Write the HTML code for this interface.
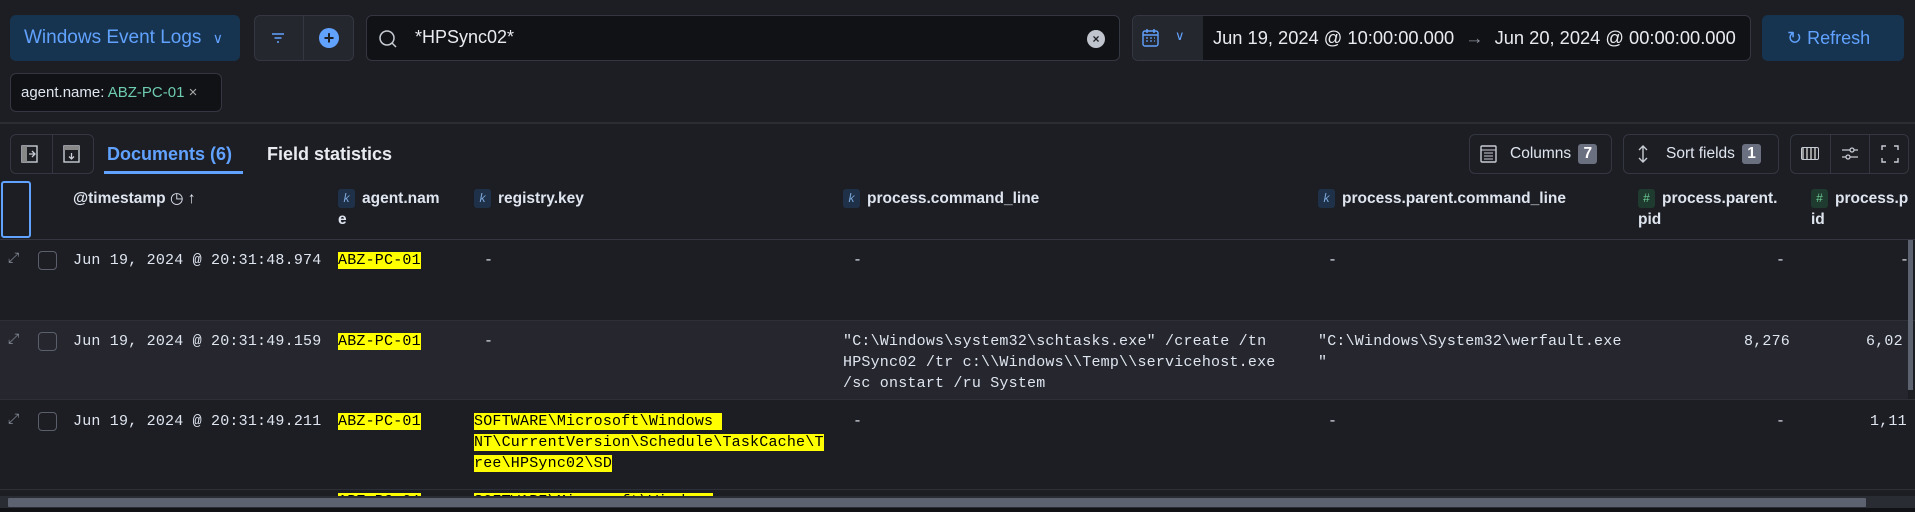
<!DOCTYPE html>
<html><head><meta charset="utf-8">
<style>
*{box-sizing:border-box;margin:0;padding:0}
body{width:1915px;height:512px;overflow:hidden;background:#1d1e24;font-family:"Liberation Sans",sans-serif;color:#dfe5ef;position:relative}
.a{position:absolute}
.btn{border:1px solid #343741;border-radius:6px}
.mono{font-family:"Liberation Mono",monospace;font-size:15px;letter-spacing:0.2px;color:#dfe5ef;line-height:21px}
.hl{background:#ffff00;color:#000}
.hd{font-weight:bold;font-size:15.5px;color:#dfe5ef;line-height:21px}
.k{display:inline-block;width:17px;height:19px;border-radius:3px;background:#1f3148;color:#7ba7d9;font-style:italic;font-size:12px;text-align:center;line-height:19px;margin-right:7px;vertical-align:1px;font-weight:normal}
.n{background:#1f3a2e;color:#6dcc95;font-style:normal}
.cb{width:19px;height:19px;border:1px solid #5a5f6b;border-radius:4px}
.exp{color:#8a8f9a;font-size:14px}
</style></head><body>
<!-- data view -->
<div class="a" style="left:10px;top:15px;width:230px;height:46px;background:#163450;border-radius:6px;color:#61a2ff;font-size:19px;line-height:46px;padding-left:14px">Windows Event Logs <span style="font-size:14px;margin-left:6px">&#8744;</span></div>
<div class="a btn" style="left:254px;top:15px;width:100px;height:46px;background:#25272f"></div>
<div class="a" style="left:303px;top:15px;width:1px;height:46px;background:#343741"></div>
<svg class="a" style="left:270px;top:30px" width="16" height="16"><path d="M2 4h12M4.5 8h7M7 12h2" stroke="#61a2ff" stroke-width="1.5"/></svg>
<div class="a" style="left:319px;top:28px;width:20px;height:20px;border-radius:50%;background:#61a2ff;color:#1d1e24;text-align:center;line-height:20px;font-weight:bold;font-size:18px">+</div>
<div class="a btn" style="left:366px;top:15px;width:754px;height:46px;background:#111216"></div>
<svg class="a" style="left:378px;top:29px" width="20" height="20"><circle cx="9" cy="9" r="7" fill="none" stroke="#c8ccd4" stroke-width="1.5"/><path d="M14 14l4 4" stroke="#c8ccd4" stroke-width="1.5"/></svg>
<div class="a" style="left:415px;top:27px;font-size:18px;color:#e8ebf0">*HPSync02*</div>
<div class="a" style="left:1087px;top:30px;width:18px;height:18px;border-radius:50%;background:#c0c4cc;color:#1d1e24;text-align:center;font-size:12px;line-height:18px;font-weight:bold">×</div>
<div class="a btn" style="left:1132px;top:15px;width:619px;height:46px;background:#111216"></div>
<div class="a" style="left:1133px;top:16px;width:70px;height:44px;background:#25272f;border-radius:5px 0 0 5px"></div>
<svg class="a" style="left:1141px;top:28px" width="20" height="20"><rect x="2" y="3" width="15" height="15" rx="2" fill="none" stroke="#61a2ff" stroke-width="1.4"/><path d="M2 7h15M6 1v4M13 1v4" stroke="#61a2ff" stroke-width="1.4"/><path d="M5 10h2M9 10h2M13 10h1M5 13h2M9 13h2M13 13h1" stroke="#61a2ff" stroke-width="1.2"/></svg>
<div class="a" style="left:1175px;top:28px;color:#61a2ff;font-size:13px">&#8744;</div>
<div class="a" style="left:1213px;top:27px;font-size:18.3px;color:#e8ebf0">Jun 19, 2024 @ 10:00:00.000 <span style="color:#8a8f9a;margin:0 6px">→</span> Jun 20, 2024 @ 00:00:00.000</div>
<div class="a" style="left:1762px;top:15px;width:142px;height:46px;background:#163450;border-radius:6px;color:#61a2ff;font-size:18px;line-height:46px;padding-left:25px">&#8635; Refresh</div>
<!-- pill -->
<div class="a btn" style="left:10px;top:73px;width:212px;height:39px;background:#111216;font-size:15px;line-height:37px;padding-left:10px">agent.name: <span style="color:#6dccb1">ABZ-PC-01</span> <span style="color:#aaa">×</span></div>
<div class="a" style="left:0;top:122px;width:1915px;height:2px;background:#2b2d35"></div>
<!-- toolbar -->
<div class="a btn" style="left:10px;top:134px;width:84px;height:40px"></div>
<div class="a" style="left:52px;top:134px;width:1px;height:40px;background:#343741"></div>
<svg class="a" style="left:20px;top:144px" width="20" height="20"><rect x="2" y="2" width="15" height="16" fill="none" stroke="#c8ccd4" stroke-width="1.4"/><path d="M2 2h5v16H2z" fill="#888"/><path d="M9 10h6M12 7l3 3-3 3" stroke="#c8ccd4" fill="none" stroke-width="1.3"/></svg>
<svg class="a" style="left:62px;top:144px" width="20" height="20"><rect x="2" y="2" width="15" height="16" fill="none" stroke="#c8ccd4" stroke-width="1.4"/><path d="M2 2h15v4H2z" fill="#888"/><path d="M9.5 9v6M7 12.5l2.5 2.5 2.5-2.5" stroke="#c8ccd4" fill="none" stroke-width="1.3"/></svg>
<div class="a" style="left:107px;top:144px;font-size:18px;font-weight:bold;color:#61a2ff">Documents (6)</div>
<div class="a" style="left:104px;top:171px;width:139px;height:3px;background:#61a2ff"></div>
<div class="a" style="left:267px;top:144px;font-size:18px;font-weight:bold;color:#e8ebf0">Field statistics</div>
<div class="a btn" style="left:1469px;top:134px;width:143px;height:40px;font-size:15.5px;line-height:38px;padding-left:40px">Columns <span style="display:inline-block;background:#6b7080;color:#fff;border-radius:3px;padding:0 5px;line-height:20px;margin-left:3px;font-weight:bold">7</span></div>
<svg class="a" style="left:1479px;top:144px" width="20" height="20"><rect x="2" y="2" width="15" height="16" rx="1" fill="none" stroke="#c8ccd4" stroke-width="1.4"/><path d="M2 6h15M5 9h9M5 12h9M5 15h9" stroke="#c8ccd4" stroke-width="1"/></svg>
<div class="a btn" style="left:1623px;top:134px;width:156px;height:40px;font-size:15.5px;line-height:38px;padding-left:42px">Sort fields <span style="display:inline-block;background:#6b7080;color:#fff;border-radius:3px;padding:0 5px;line-height:20px;margin-left:3px;font-weight:bold">1</span></div>
<svg class="a" style="left:1636px;top:144px" width="14" height="20"><path d="M7 2v16M3 6l4-4 4 4M3 14l4 4 4-4" stroke="#c8ccd4" fill="none" stroke-width="1.4"/></svg>
<div class="a btn" style="left:1790px;top:134px;width:119px;height:40px"></div>
<div class="a" style="left:1830px;top:134px;width:1px;height:40px;background:#343741"></div>
<div class="a" style="left:1869px;top:134px;width:1px;height:40px;background:#343741"></div>
<div class="a" style="left:1801px;top:147px;width:18px;height:13px;border:1.5px solid #c8ccd4;border-radius:2px;background:repeating-linear-gradient(90deg,#999 0 2px,transparent 2px 4px)"></div>
<svg class="a" style="left:1840px;top:144px" width="20" height="20"><path d="M2 6h16M2 13h16" stroke="#c8ccd4" stroke-width="1.3"/><circle cx="12" cy="6" r="2" fill="#1d1e24" stroke="#c8ccd4" stroke-width="1.3"/><circle cx="8" cy="13" r="2" fill="#1d1e24" stroke="#c8ccd4" stroke-width="1.3"/></svg>
<svg class="a" style="left:1880px;top:144px" width="20" height="20"><path d="M2 6V2h4M14 2h4v4M18 14v4h-4M6 18H2v-4" stroke="#c8ccd4" fill="none" stroke-width="1.4"/></svg>
<!-- header -->
<div class="a" style="left:1px;top:181px;width:30px;height:57px;border:2px solid #61a2ff;border-radius:3px"></div>
<div class="a hd" style="left:73px;top:188px">@timestamp <span style="font-weight:normal">&#9719; ↑</span></div>
<div class="a hd" style="left:338px;top:188px;width:110px"><span class="k">k</span>agent.nam<br>e</div>
<div class="a hd" style="left:474px;top:188px"><span class="k">k</span>registry.key</div>
<div class="a hd" style="left:843px;top:188px"><span class="k">k</span>process.command_line</div>
<div class="a hd" style="left:1318px;top:188px"><span class="k">k</span>process.parent.command_line</div>
<div class="a hd" style="left:1638px;top:188px"><span class="k n">#</span>process.parent.<br>pid</div>
<div class="a hd" style="left:1811px;top:188px;width:97px;overflow:hidden;white-space:nowrap"><span class="k n">#</span>process.p<br>id</div>
<div class="a" style="left:0;top:239px;width:1915px;height:1px;background:#343741"></div>
<!-- rows -->
<div class="a" style="left:0;top:320px;width:1908px;height:79px;background:#25262e"></div>
<div class="a" style="left:0;top:320px;width:1915px;height:1px;background:#2e3038"></div>
<div class="a" style="left:0;top:399px;width:1915px;height:1px;background:#2e3038"></div>
<div class="a" style="left:0;top:489px;width:1915px;height:1px;background:#2e3038"></div>

<div class="a exp" style="left:8px;top:249px">⤢</div><div class="a cb" style="left:38px;top:251px"></div>
<div class="a mono" style="left:73px;top:250px">Jun 19, 2024 @ 20:31:48.974</div>
<div class="a mono" style="left:338px;top:250px"><span class="hl">ABZ-PC-01</span></div>
<div class="a mono" style="left:484px;top:250px">-</div>
<div class="a mono" style="left:853px;top:250px">-</div>
<div class="a mono" style="left:1328px;top:250px">-</div>
<div class="a mono" style="left:1776px;top:250px">-</div>
<div class="a mono" style="left:1900px;top:250px">-</div>

<div class="a exp" style="left:8px;top:330px">⤢</div><div class="a cb" style="left:38px;top:332px"></div>
<div class="a mono" style="left:73px;top:331px">Jun 19, 2024 @ 20:31:49.159</div>
<div class="a mono" style="left:338px;top:331px"><span class="hl">ABZ-PC-01</span></div>
<div class="a mono" style="left:484px;top:331px">-</div>
<div class="a mono" style="left:843px;top:331px;white-space:pre">"C:\Windows\system32\schtasks.exe" /create /tn
HPSync02 /tr c:\\Windows\\Temp\\servicehost.exe
/sc onstart /ru System</div>
<div class="a mono" style="left:1318px;top:331px;white-space:pre">"C:\Windows\System32\werfault.exe
"</div>
<div class="a mono" style="left:1744px;top:331px">8,276</div>
<div class="a mono" style="left:1866px;top:331px">6,02</div>

<div class="a exp" style="left:8px;top:410px">⤢</div><div class="a cb" style="left:38px;top:412px"></div>
<div class="a mono" style="left:73px;top:411px">Jun 19, 2024 @ 20:31:49.211</div>
<div class="a mono" style="left:338px;top:411px"><span class="hl">ABZ-PC-01</span></div>
<div class="a mono" style="left:474px;top:411px;white-space:pre"><span class="hl">SOFTWARE\Microsoft\Windows </span>
<span class="hl">NT\CurrentVersion\Schedule\TaskCache\T</span>
<span class="hl">ree\HPSync02\SD</span></div>
<div class="a mono" style="left:853px;top:411px">-</div>
<div class="a mono" style="left:1328px;top:411px">-</div>
<div class="a mono" style="left:1776px;top:411px">-</div>
<div class="a mono" style="left:1870px;top:411px">1,11</div>

<div class="a mono" style="left:338px;top:491px;height:5px;overflow:hidden"><span class="hl">ABZ-PC-01</span></div>
<div class="a mono" style="left:474px;top:491px;height:5px;overflow:hidden"><span class="hl">SOFTWARE\Microsoft\Windows</span></div>
<!-- scrollbars -->
<div class="a" style="left:0;top:496px;width:1915px;height:12px;background:#2a2c33"></div>
<div class="a" style="left:8px;top:498px;width:1858px;height:9px;background:#5d6270;border-radius:1px"></div>
<div class="a" style="left:1908px;top:240px;width:5px;height:150px;background:#5d6270"></div>
<div class="a" style="left:0;top:508px;width:1915px;height:4px;background:#111216"></div>
</body></html>
